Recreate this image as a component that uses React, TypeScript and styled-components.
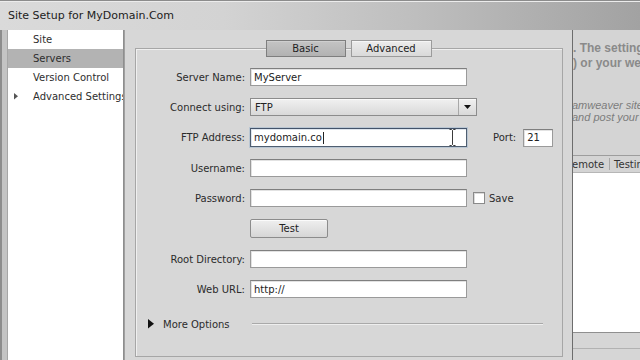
import React from "react";
import styled, { createGlobalStyle } from "styled-components";

const FONT = `"DejaVu Sans", Verdana, sans-serif`;

const Global = createGlobalStyle`
  html, body { margin: 0; padding: 0; width: 640px; height: 360px; overflow: hidden; background: #c8c8c8; }
  * { box-sizing: border-box; }
`;

const Window = styled.div`
  width: 640px;
  height: 360px;
  display: flex;
  flex-direction: column;
  font-family: ${FONT};
  font-size: 10px;
  color: #2b2b2b;
  overflow: hidden;
`;

const TitleBar = styled.div`
  height: 30px;
  flex: none;
  display: flex;
  align-items: center;
  padding: 0 0 1px 8px;
  font-size: 11px;
  color: #1c1c1c;
  border-top: 1px solid #8c8c8c;
  background: linear-gradient(to right, #dadada 0%, #d3d3d3 35%, #bebebe 65%, #a2a2a2 100%);
  box-shadow: inset 0 1px 0 #ececec;
`;

const Body = styled.div`
  flex: 1;
  min-height: 0;
  display: flex;
`;

const LeftFrame = styled.div`
  width: 8px;
  flex: none;
  background: #c4c4c4;
  border-left: 2px solid #8d8d8d;
  border-right: 1px solid #a6a6a6;
`;

const Sidebar = styled.div`
  width: 115px;
  flex: none;
  background: #fff;
  display: flex;
  flex-direction: column;
  overflow: hidden;
`;

const NavItem = styled.div<{ $selected?: boolean }>`
  height: 19px;
  display: flex;
  align-items: center;
  padding-left: 6px;
  white-space: nowrap;
  color: #2e2e2e;
  background: ${(p) => (p.$selected ? "#b3b3b3" : "transparent")};
`;

const NavArrow = styled.span`
  width: 19px;
  flex: none;
  display: flex;
  align-items: center;
`;

const Splitter = styled.div`
  width: 2px;
  flex: none;
  background: #a0a0a0;
  border-left: 1px solid #8e8e8e;
`;

const Modal = styled.div`
  width: 447px;
  flex: none;
  background: #d7d7d7;
  padding: 10px 9px 3px 10px;
  display: flex;
  flex-direction: column;
`;

const TabRow = styled.div`
  position: relative;
  z-index: 1;
  display: flex;
  justify-content: center;
  gap: 5px;
  margin-bottom: -9px;
  padding-right: 1px;
`;

const Tab = styled.div<{ $active?: boolean; $w: number }>`
  width: ${(p) => p.$w}px;
  height: 17px;
  display: flex;
  align-items: center;
  justify-content: center;
  font-size: 10px;
  color: #222;
  border: 1px solid ${(p) => (p.$active ? "#7e7e7e" : "#9b9b9b")};
  background: ${(p) =>
    p.$active
      ? "linear-gradient(#c4c4c4, #b2b2b2)"
      : "linear-gradient(#ececec, #d9d9d9)"};
  box-shadow: inset 0 1px 0 ${(p) => (p.$active ? "#cfcfcf" : "#f6f6f6")};
`;

const Panel = styled.div`
  flex: 1;
  border: 1px solid #a6a6a6;
  box-shadow: inset 1px 1px 0 #efefef;
  padding-top: 19px;
  display: flex;
  flex-direction: column;
  gap: 12px;
`;

const Row = styled.div`
  display: flex;
  align-items: center;
`;

const Label = styled.div`
  width: 109px;
  margin-right: 5px;
  text-align: right;
  white-space: nowrap;
  color: #2b2b2b;
`;

const Field = styled.div<{ $w?: number; $focus?: boolean }>`
  position: relative;
  width: ${(p) => p.$w ?? 217}px;
  height: ${(p) => (p.$focus ? 19 : 18)}px;
  background: #fff;
  border: 1px solid ${(p) => (p.$focus ? "#4f5e70" : "#9a9a9a")};
  border-top-color: ${(p) => (p.$focus ? "#43536a" : "#7f7f7f")};
  box-shadow: ${(p) =>
    p.$focus ? "0 0 0 1px #b9c6d3, inset 1px 1px 0 #dfe6ee" : "inset 1px 1px 0 #e2e2e2"};
  display: flex;
  align-items: center;
  padding: 0 3px;
  white-space: nowrap;
  color: #222;
`;

const Caret = styled.span`
  display: inline-block;
  width: 1px;
  height: 12px;
  background: #222;
  margin-left: 1px;
`;

const MouseCursor = styled.svg`
  position: absolute;
  left: 198px;
  top: 0px;
`;

const Select = styled.div`
  width: 227px;
  height: 18px;
  display: flex;
  border: 1px solid #8c8c8c;
  background: linear-gradient(#f1f1f1, #d9d9d9);
  box-shadow: inset 0 1px 0 #fafafa;
`;

const SelectValue = styled.div`
  flex: 1;
  display: flex;
  align-items: center;
  padding-left: 4px;
  color: #222;
`;

const SelectArrow = styled.div`
  width: 18px;
  display: flex;
  align-items: center;
  justify-content: center;
  border-left: 1px solid #a8a8a8;
`;

const SideLabel = styled.div<{ $ml: number }>`
  margin-left: ${(p) => p.$ml}px;
  white-space: nowrap;
  color: #2b2b2b;
`;

const Checkbox = styled.div`
  width: 12px;
  height: 12px;
  margin-left: 6px;
  background: #fff;
  border: 1px solid #8a8a8a;
  box-shadow: inset 1px 1px 0 #dadada;
`;

const Button = styled.div`
  width: 78px;
  height: 19px;
  display: flex;
  align-items: center;
  justify-content: center;
  border: 1px solid #8c8c8c;
  border-radius: 2px;
  background: linear-gradient(#efefef, #d6d6d6);
  box-shadow: inset 0 1px 0 #fbfbfb;
  color: #222;
`;

const MoreRow = styled.div`
  margin-top: 8px;
  height: 12px;
  display: flex;
  align-items: center;
  padding-left: 12px;
  color: #2b2b2b;
`;

const MoreText = styled.span`
  margin-left: 9px;
  white-space: nowrap;
`;

const Rule = styled.div`
  flex: 1;
  height: 2px;
  margin: 0 19px 0 22px;
  border-top: 1px solid #a9a9a9;
  border-bottom: 1px solid #eeeeee;
`;

const BackWindow = styled.div`
  flex: 1;
  min-width: 0;
  background: #d4d4d4;
  border-left: 1px solid #6d6d6d;
  display: flex;
  flex-direction: column;
  overflow: hidden;
`;

const BackCopy = styled.div`
  height: 125px;
  flex: none;
  padding-top: 11px;
  white-space: nowrap;
  overflow: hidden;
`;

const BoldLine = styled.div`
  font-family: "Liberation Sans", Arial, sans-serif;
  font-weight: bold;
  font-size: 12px;
  line-height: 15px;
  color: #8a8a8a;
`;

const ItalicLine = styled.div<{ $mt?: number }>`
  margin-top: ${(p) => p.$mt ?? 0}px;
  margin-left: -1px;
  font-family: "Liberation Sans", Arial, sans-serif;
  font-style: italic;
  font-size: 11px;
  line-height: 12px;
  color: #7c7c7c;
`;

const TableHead = styled.div`
  height: 18px;
  flex: none;
  display: flex;
  align-items: center;
  border-top: 1px solid #9d9d9d;
  border-bottom: 1px solid #b6b6b6;
  white-space: nowrap;
  color: #333;
`;

const HeadSep = styled.span`
  width: 1px;
  height: 12px;
  background: #a8a8a8;
  margin: 0 4px 0 5px;
  flex: none;
`;

const TableBody = styled.div`
  height: 159px;
  flex: none;
  background: #fff;
`;

const TableFoot = styled.div`
  flex: 1;
  border-top: 1px solid #8f8f8f;
  background: #d6d6d6;
`;

const FootBar = styled.div`
  height: 16px;
  border-bottom: 1px solid #b2b2b2;
`;

const RightTriangle = ({ size = 5, color = "#333" }: { size?: number; color?: string }) => (
  <svg width={size} height={size * 1.6} viewBox="0 0 5 8">
    <polygon points="0,0 5,4 0,8" fill={color} />
  </svg>
);

export default function App() {
  return (
    <>
      <Global />
      <Window>
        <TitleBar>Site Setup for MyDomain.Com</TitleBar>
        <Body>
          <LeftFrame />
          <Sidebar>
            <NavItem>
              <NavArrow />
              Site
            </NavItem>
            <NavItem $selected>
              <NavArrow />
              Servers
            </NavItem>
            <NavItem>
              <NavArrow />
              Version Control
            </NavItem>
            <NavItem>
              <NavArrow>
                <RightTriangle size={4} color="#555" />
              </NavArrow>
              Advanced Settings
            </NavItem>
          </Sidebar>
          <Splitter />
          <Modal>
            <TabRow>
              <Tab $active $w={80}>Basic</Tab>
              <Tab $w={81}>Advanced</Tab>
            </TabRow>
            <Panel>
              <Row>
                <Label>Server Name:</Label>
                <Field>MyServer</Field>
              </Row>
              <Row>
                <Label>Connect using:</Label>
                <Select>
                  <SelectValue>FTP</SelectValue>
                  <SelectArrow>
                    <svg width="7" height="4" viewBox="0 0 7 4">
                      <polygon points="0,0 7,0 3.5,4" fill="#111" />
                    </svg>
                  </SelectArrow>
                </Select>
              </Row>
              <Row>
                <Label>FTP Address:</Label>
                <Field $focus>
                  mydomain.co
                  <Caret />
                  <MouseCursor width="7" height="17" viewBox="0 0 7 17">
                    <path d="M0.5 0.5 H2.5 L3.5 1.5 L4.5 0.5 H6.5 M3.5 1.5 V15.5 M0.5 16.5 H2.5 L3.5 15.5 L4.5 16.5 H6.5" stroke="#3a3a3a" strokeWidth="1" fill="none" />
                  </MouseCursor>
                </Field>
                <SideLabel $ml={26}>Port:</SideLabel>
                <Field $w={30} style={{ marginLeft: 7 }}>21</Field>
              </Row>
              <Row>
                <Label>Username:</Label>
                <Field />
              </Row>
              <Row>
                <Label>Password:</Label>
                <Field />
                <Checkbox />
                <SideLabel $ml={4}>Save</SideLabel>
              </Row>
              <Row>
                <Label />
                <Button>Test</Button>
              </Row>
              <Row>
                <Label>Root Directory:</Label>
                <Field />
              </Row>
              <Row>
                <Label>Web URL:</Label>
                <Field>http://</Field>
              </Row>
              <MoreRow>
                <RightTriangle size={6} color="#111" />
                <MoreText>More Options</MoreText>
                <Rule />
              </MoreRow>
            </Panel>
          </Modal>
          <BackWindow>
            <BackCopy>
              <BoldLine>. The settings here</BoldLine>
              <BoldLine>) or your web</BoldLine>
              <ItalicLine $mt={28}>amweaver site</ItalicLine>
              <ItalicLine>and post your</ItalicLine>
            </BackCopy>
            <TableHead>
              <span style={{ marginLeft: -1 }}>emote</span>
              <HeadSep />
              <span>Testing</span>
            </TableHead>
            <TableBody />
            <TableFoot>
              <FootBar />
            </TableFoot>
          </BackWindow>
        </Body>
      </Window>
    </>
  );
}
